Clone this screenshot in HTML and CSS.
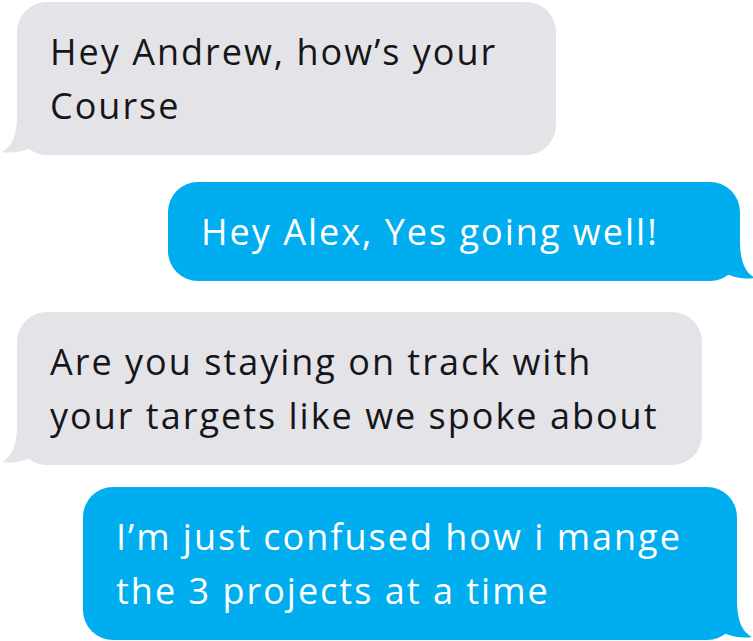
FILE: index.html
```html
<!DOCTYPE html>
<html lang="en">
<head>
    <meta charset="UTF-8">
    <meta name="viewport" content="width=device-width, initial-scale=1.0">
    <title>Chat</title>
    <link rel="stylesheet" href="styles.css">
</head>
<body>
    <div class="chat">
        <div class="bubble incoming first">
            Hey Andrew, how’s your<br>Course
            <svg class="tail" viewBox="0 0 45 45"><path d="M28 5 L15 5 C15 27 9 37 0 42 C9 43.5 19 42 27 38.5 L30 20 Z"/></svg>
        </div>
        <div class="bubble outgoing second">
            Hey Alex, Yes going well!
            <svg class="tail" viewBox="0 0 45 45"><path d="M17 5 L30 5 C30 27 36 37 45 42 C36 43.5 26 42 18 38.5 L15 20 Z"/></svg>
        </div>
        <div class="bubble incoming third">
            Are you staying on track with<br>your targets like we spoke about
            <svg class="tail" viewBox="0 0 45 45"><path d="M28 5 L15 5 C15 27 9 37 0 42 C9 43.5 19 42 27 38.5 L30 20 Z"/></svg>
        </div>
        <div class="bubble outgoing fourth">
            I’m just confused how i mange<br>the 3 projects at a time
            <svg class="tail" viewBox="0 0 45 45"><path d="M17 5 L30 5 C30 27 36 37 45 42 C36 43.5 26 42 18 38.5 L15 20 Z"/></svg>
        </div>
    </div>
</body>
</html>
```

FILE: styles.css
```css
* {
    margin: 0;
    padding: 0;
    box-sizing: border-box;
}

body {
    background: #ffffff;
    font-family: 'Open Sans', sans-serif;
}

.chat {
    width: 753px;
    display: flex;
    flex-direction: column;
    padding-top: 2px;
}

.bubble {
    position: relative;
    font-size: 36px;
    line-height: 54px;
    letter-spacing: 2px;
    padding: 23px 0 22px 33px;
    border-radius: 30px;
    white-space: nowrap;
}

.bubble .tail {
    position: absolute;
    bottom: 0;
    width: 45px;
    height: 45px;
}

.incoming {
    background: #e4e4e8;
    color: #16161a;
    margin-left: 17px;
}

.incoming .tail {
    left: -15px;
    fill: #e4e4e8;
}

.outgoing {
    background: #00aeef;
    color: #ffffff;
}

.outgoing .tail {
    right: -15px;
    fill: #00aeef;
}

.first {
    width: 539px;
}

.second {
    width: 572px;
    margin-left: 168px;
    margin-top: 27px;
}

.third {
    width: 685px;
    margin-top: 31px;
}

.fourth {
    width: 654px;
    margin-left: 83px;
    margin-top: 22px;
}
```
